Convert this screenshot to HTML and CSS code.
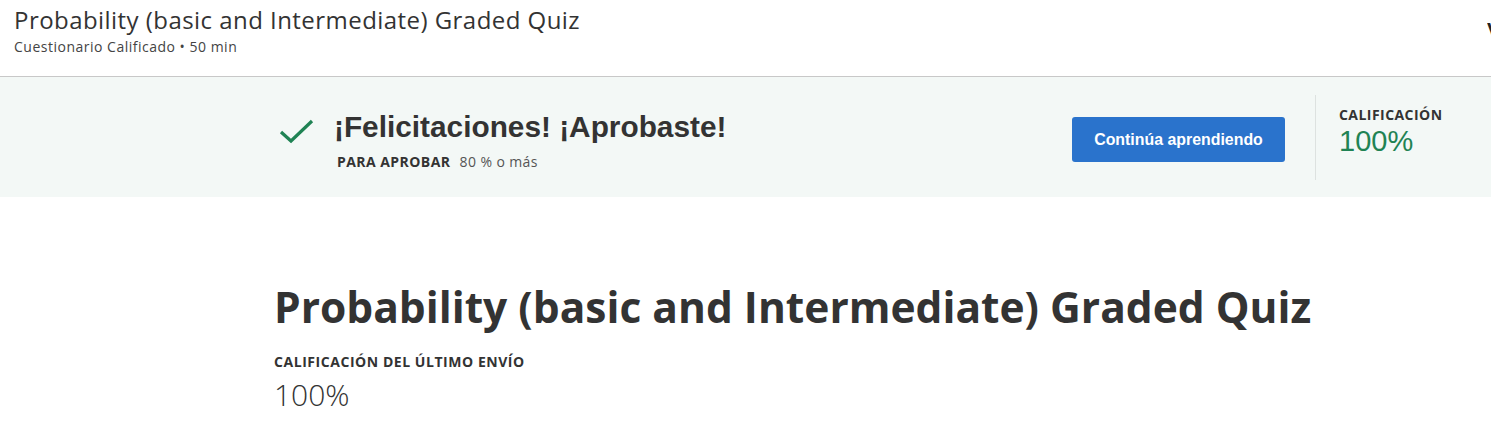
FILE: index.html
```html
<!DOCTYPE html>
<html lang="es">
<head>
<meta charset="utf-8">
<link rel="stylesheet" href="styles.css">
</head>
<body>
<header class="topbar">
  <div class="topbar-text">
    <h1 class="topbar-title">Probability (basic and Intermediate) Graded Quiz</h1>
    <div class="topbar-sub">Cuestionario Calificado • 50 min</div>
  </div>
  <div class="topbar-right">V</div>
</header>
<section class="banner">
  <div class="banner-main">
    <svg class="check" width="36" height="28" viewBox="0 0 36 28"><path d="M2 15 L12 24 L33 4" fill="none" stroke="#1f8354" stroke-width="3.2"/></svg>
    <div class="banner-text">
      <h2 class="congrats">¡Felicitaciones! ¡Aprobaste!</h2>
      <div class="pass"><span class="pass-label">PARA APROBAR</span><span class="pass-val">80 % o más</span></div>
    </div>
  </div>
  <button class="btn">Continúa aprendiendo</button>
  <div class="divider"></div>
  <div class="grade">
    <div class="grade-label">CALIFICACIÓN</div>
    <div class="grade-val">100%</div>
  </div>
</section>
<main class="content">
  <h1 class="main-title">Probability (basic and Intermediate) Graded Quiz</h1>
  <div class="last-label">CALIFICACIÓN DEL ÚLTIMO ENVÍO</div>
  <div class="last-val">100%</div>
</main>
</body>
</html>
```
FILE: styles.css
```css
* { box-sizing: border-box; }
html, body { margin: 0; padding: 0; background: #fff; overflow: hidden; }
body { font-family: "Open Sans", sans-serif; color: #333; width: 1491px; }
.topbar {
  height: 77px;
  border-bottom: 1px solid #c8c8c8;
  display: flex;
  justify-content: space-between;
  padding: 3px 0 0 14px;
}
.topbar-title {
  margin: 0;
  font-weight: 400;
  font-size: 24px;
  letter-spacing: 0.45px;
  line-height: 34px;
  color: #333;
}
.topbar-sub { font-size: 14px; letter-spacing: 0.5px; line-height: 18px; color: #444; margin-top: 1px; }
.topbar-right {
  font-family: "Liberation Sans", sans-serif;
  font-weight: 700;
  font-size: 20px;
  width: 4px;
  overflow: hidden;
  margin-top: 16px;
  color: #222;
}
.banner {
  height: 120px;
  background: #f3f8f6;
  display: flex;
  align-items: flex-start;
  padding-left: 279px;
}
.banner-main { display: flex; align-items: flex-start; width: 793px; padding-top: 33px; }
.check { margin-top: 7px; flex: none; }
.banner-text { margin-left: 19px; }
.congrats {
  margin: 0;
  font-family: "Liberation Sans", sans-serif;
  font-weight: 700;
  font-size: 29.8px;
  line-height: 34px;
  color: #333;
}
.pass { margin-top: 8px; font-size: 14px; line-height: 20px; margin-left: 3px; letter-spacing: 0.45px; }
.pass-label { font-weight: 700; color: #333; margin-right: 9px; }
.pass-val { color: #555; letter-spacing: 0.4px; }
.btn {
  margin-top: 40px;
  width: 213px;
  height: 45px;
  background: #2a73cc;
  border: none;
  border-radius: 3px;
  color: #fff;
  font-family: "Liberation Sans", sans-serif;
  font-weight: 700;
  font-size: 15.9px;
  padding: 0;
}
.divider { width: 1px; height: 85px; background: #dde2e0; margin: 18px 0 0 30px; }
.grade { margin-left: 23px; padding-top: 28px; }
.grade-label { font-weight: 700; font-size: 14px; line-height: 20px; color: #333; letter-spacing: 0.45px; }
.grade-val {
  font-family: "Liberation Sans", sans-serif;
  font-size: 29px;
  line-height: 30px;
  color: #1f8354;
  margin-top: 1px;
}
.content { padding: 82px 0 0 274px; }
.main-title {
  margin: 0;
  font-weight: 700;
  font-size: 42.5px;
  line-height: 56px;
  color: #333;
}
.last-label { font-weight: 700; font-size: 14px; letter-spacing: 0.55px; line-height: 20px; margin-top: 17px; color: #333; }
.last-val { font-weight: 300; font-size: 30px; line-height: 38px; margin-top: 4px; color: #333; }
```
